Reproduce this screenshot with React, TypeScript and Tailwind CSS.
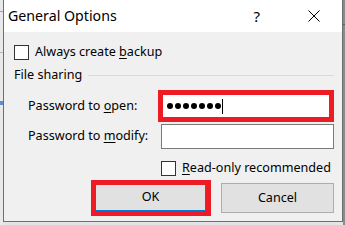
import { type ReactNode } from "react";

const font = "font-['Segoe_UI','Noto_Sans','Open_Sans',sans-serif]";

function CheckBox() {
  return <div className="w-[15px] h-[15px] shrink-0 border border-[#333333] bg-white" />;
}

function Label({ children, className = "" }: { children: ReactNode; className?: string }) {
  return <span className={`text-[12.6px] leading-none text-black whitespace-nowrap ${className}`}>{children}</span>;
}

export default function App() {
  return (
    <div className={`w-[345px] h-[225px] overflow-hidden flex bg-[#e4e4e4] ${font}`}>
      {/* window behind, left edge */}
      <div className="w-[3px] h-full flex flex-col bg-[#e9e9e9]">
        <div className="h-[11px]" />
        <div className="h-px bg-[#a0a0a0]" />
        <div className="h-[40px]" />
        <div className="h-px bg-[#b5b5b5]" />
        <div className="h-[48px]" />
        <div className="h-[4px] bg-[#5b8fd0]" />
      </div>

      {/* dialog */}
      <div className="w-[340px] h-[222px] shrink-0 flex flex-col border-l border-r border-b border-[#6e6e6e] bg-[#f0f0f0]">
        {/* title bar */}
        <div className="h-[32px] shrink-0 bg-white flex items-center pl-[4px]">
          <span className="text-[14.2px] leading-none text-black">General Options</span>
          <span className="ml-auto text-[15px] leading-none text-black">?</span>
          <div className="w-[12px] h-[12px] ml-[48px] mr-[22px]">
            <svg viewBox="0 0 12 12" width="12" height="12">
              <path d="M0.5 0.5 L11.5 11.5 M11.5 0.5 L0.5 11.5" stroke="#000" strokeWidth="1" fill="none" />
            </svg>
          </div>
        </div>

        <div className="flex flex-col pl-[10px] pr-[8px]">
          {/* backup */}
          <div className="mt-[13px] flex items-center gap-[6px]">
            <CheckBox />
            <Label>
              Always create <u className="underline-offset-2">b</u>ackup
            </Label>
          </div>

          {/* group header */}
          <div className="mt-[8px] h-[14px] flex items-center">
            <Label>File sharing</Label>
            <div className="flex-1 h-px bg-[#d9d9d9] ml-[6px]" />
          </div>

          {/* password to open */}
          <div className="mt-[8px] flex items-center pl-[14px]">
            <Label className="w-[130px]">
              Password to <u className="underline-offset-2">o</u>pen:
            </Label>
            <div className="w-[176px] h-[32px] border-[5px] border-[#ed1c24] bg-white flex items-center pl-[4px]">
              <div className="flex gap-[2px]">
                {Array.from({ length: 7 }).map((_, i) => (
                  <span key={i} className="w-[6px] h-[6px] rounded-full bg-black" />
                ))}
              </div>
              <div className="ml-[1px] w-px h-[15px] bg-black" />
            </div>
          </div>

          {/* password to modify */}
          <div className="mt-[2px] flex items-center pl-[14px]">
            <Label className="w-[133px]">
              Password to <u className="underline-offset-2">m</u>odify:
            </Label>
            <div className="w-[173px] h-[25px] border border-[#7a7a7a] bg-white" />
          </div>

          {/* read-only */}
          <div className="mt-[12px] flex items-center gap-[6px] pl-[147px]">
            <CheckBox />
            <Label>
              <u className="underline-offset-2">R</u>ead-only recommended
            </Label>
          </div>

          {/* buttons */}
          <div className="mt-[4px] flex items-center justify-end gap-[10px]">
            <div className="w-[120px] h-[36px] border-[5px] border-[#ed1c24] flex">
              <div className="flex-1 bg-[#e1e1e1] border-r border-b border-[#0078d7] flex items-center justify-center">
                <Label>OK</Label>
              </div>
            </div>
            <button className="w-[113px] h-[30px] border border-[#adadad] bg-[#e1e1e1] flex items-center justify-center">
              <Label>Cancel</Label>
            </button>
          </div>
        </div>
      </div>

      {/* window behind, right edge */}
      <div className="flex-1 h-full flex flex-col bg-[#8a8a8a]">
        <div className="h-[24px]" />
        <div className="h-px bg-[#5a5a5a]" />
      </div>
    </div>
  );
}
